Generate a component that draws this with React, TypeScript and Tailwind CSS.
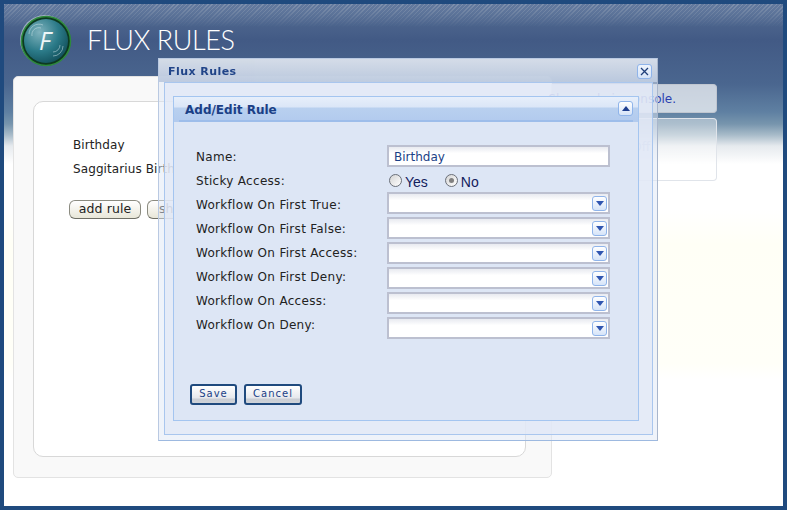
import React from "react";

const labels = [
  "Name:",
  "Sticky Access:",
  "Workflow On First True:",
  "Workflow On First False:",
  "Workflow On First Access:",
  "Workflow On First Deny:",
  "Workflow On Access:",
  "Workflow On Deny:",
];

function Tri({ up = false }: { up?: boolean }) {
  return (
    <svg width="8" height="5" viewBox="0 0 8 5">
      <path d={up ? "M0 5L4 0L8 5Z" : "M0 0L8 0L4 5Z"} fill={up ? "#1f3f8f" : "#2f55b0"} />
    </svg>
  );
}

function IconBox({ up = false }: { up?: boolean }) {
  return (
    <span className="flex h-[15px] w-[15px] items-center justify-center rounded-[3px] border border-[#8fb4ea] bg-[linear-gradient(#ffffff,#d6e4f8)]">
      <Tri up={up} />
    </span>
  );
}

function Select() {
  return (
    <div className="flex h-[22px] w-[223px] items-center justify-end border-2 border-[#bcc0d0] bg-[linear-gradient(#e8eaf0,#ffffff_35%)] pr-[1px]">
      <IconBox />
    </div>
  );
}

function Radio({ on = false, label }: { on?: boolean; label: string }) {
  return (
    <span className="flex items-center">
      <span className="flex h-[13px] w-[13px] items-center justify-center rounded-full border border-[#6a6f78] bg-[linear-gradient(135deg,#d4d4d4,#ffffff)]">
        {on && <span className="h-[5px] w-[5px] rounded-full bg-[#808080]" />}
      </span>
      <span className="ml-[3px] mt-[3px] font-['Liberation_Sans',sans-serif] text-[14px] leading-[16px] text-[#12205c]">{label}</span>
    </span>
  );
}

function Logo() {
  return (
    <svg width="54" height="54" viewBox="0 0 54 54" className="shrink-0">
      <defs>
        <radialGradient id="lg" cx="35%" cy="30%" r="80%">
          <stop offset="0" stopColor="#7fb2bd" />
          <stop offset="0.55" stopColor="#2b7a88" />
          <stop offset="1" stopColor="#0f4a55" />
        </radialGradient>
      </defs>
      <circle cx="26" cy="26" r="25" fill="#cfd8e0" opacity="0.6" />
      <circle cx="27" cy="27" r="24.5" fill="#0c3a20" />
      <circle cx="27" cy="27" r="24.5" fill="none" stroke="#2e8a3c" strokeWidth="1.5" />
      <circle cx="27" cy="27" r="22" fill="url(#lg)" />
      <path d="M10 20a10 10 0 0 1 14-9M13 22a7 7 0 0 1 9-8M34 42a10 10 0 0 0 10-10M34 38a7 7 0 0 0 7-7" fill="none" stroke="#cfe6ea" strokeOpacity="0.5" strokeWidth="1" />
      <text x="26" y="36" textAnchor="middle" fontSize="25" fontStyle="italic" fontFamily="'Open Sans', sans-serif" fill="#eef6f8">F</text>
    </svg>
  );
}

export default function App() {
  return (
    <div className="relative h-[510px] w-[787px] overflow-hidden border-4 border-[#1f4a7e] bg-[linear-gradient(#6f83a3_0px,#4a628b_22px,#425a85_36px,#4a668f_80px,#5f80a2_108px,#7795ad_120px,#a8bbc9_131px,#e6eaee_142px,#ffffff_160px,#ffffff_205px,#fffff6_240px,#fffff8_360px,#ffffff_375px)] font-['DejaVu_Sans',sans-serif]">
      <div className="absolute inset-x-0 top-0 h-[24px] bg-[repeating-linear-gradient(135deg,#8d9db6_0px,#8d9db6_1px,#56709a_1px,#56709a_3px)] opacity-50 [mask-image:linear-gradient(#000,transparent)]" />
      <header className="relative flex h-[72px] items-start pl-[15px] pt-[10px]">
        <Logo />
        <h1 className="ml-[14px] mt-[8px] font-['Lato',sans-serif] text-[27px] font-light leading-[36px] tracking-[-0.4px] text-white">
          FLUX RULES
        </h1>
      </header>

      <main className="relative flex items-start pl-[9px]">
        <section className="h-[402px] w-[539px] rounded-[5px] border border-[#e3e3e3] bg-[#f9f9f9] pl-[19px] pt-[24px]">
          <div className="h-[356px] w-[493px] rounded-[10px] border border-[#d8d8d8] bg-white pl-[35px] pt-[31px] text-[12px] tracking-[0.1px] text-[#222]">
            <p className="ml-[4px] leading-[24px]">Birthday</p>
            <p className="ml-[4px] leading-[24px]">Saggitarius Birthday</p>
            <div className="mt-[19px] flex gap-[6px]">
              <button className="h-[19px] w-[72px] rounded-[6px] border border-[#8b8b80] border-b-[#6f6f66] bg-[linear-gradient(#ffffff,#e8e6d8)] text-[12.5px] leading-none text-[#222]">add rule</button>
              <button className="h-[19px] w-[40px] rounded-l-[6px] border border-r-0 border-[#8b8b80] border-b-[#6f6f66] bg-[linear-gradient(#ffffff,#e8e6d8)] pl-[11px] text-left text-[12.5px] leading-none text-[#222]">show</button>
            </div>
          </div>
        </section>
        <aside className="mt-[8px] w-[165px]">
          <div className="flex h-[29px] items-center justify-end whitespace-nowrap rounded-r-[4px] border border-l-0 border-[#c0c6d0] bg-[#ffffff]/70 pr-[40px] text-[12px] text-[#2a3fb0]">
            Show rule in console.
          </div>
          <div className="mt-[5px] flex h-[63px] items-center justify-end whitespace-nowrap rounded-r-[4px] border border-l-0 border-[#e0e4ea] bg-[#ffffff]/40 pr-[66px] pb-[6px] text-[12px] text-[#aab8d8]">
            Turn Rule Off
          </div>
        </aside>
      </main>

      <div className="absolute left-[154px] top-[54px] h-[383px] w-[500px] border border-[#b9c9e2] border-b-[#9db9e0] border-r-[#a9b6cc] bg-[#dfe7f5]/50">
        <div className="h-[23px] bg-[linear-gradient(#d8dfea,#bccadf)] pl-[9px] pt-[6px] text-[11px] font-bold leading-[14px] tracking-[0.45px] text-[#1a3f86] opacity-95">
          Flux Rules
        </div>
        <span className="absolute right-[5px] top-[5px]">
          <span className="flex h-[15px] w-[15px] items-center justify-center rounded-[3px] border border-[#8fb4ea] bg-[linear-gradient(#eef4fc,#d6e4f8)]">
            <svg width="9" height="9" viewBox="0 0 9 9"><path d="M1 1L8 8M8 1L1 8" stroke="#1f3f7a" strokeWidth="1.3" /></svg>
          </span>
        </span>
        <div className="ml-[5px] h-[353px] w-[489px] border border-[#a9c6ee] bg-[#e2e9f6]/80 pl-[8px] pt-[13px]">
          <div className="h-[325px] w-[466px] border border-[#a4c5f0] bg-[#dde6f5]">
            <div className="relative flex h-[25px] items-start bg-[linear-gradient(#e7effb_0px,#dbe6f7_10px,#b9d0ef_11px,#b3cbee_23px)] pl-[11px] pt-[6px] text-[12px] font-bold leading-[14px] text-[#1a3f86]">
              Add/Edit Rule
              <span className="absolute right-[5px] top-[4px]"><IconBox up /></span>
              <span className="absolute bottom-0 left-[5px] right-[5px] h-[2px] bg-[#9dbdea]" />
            </div>
            <div className="flex pl-[22px] pt-[23px]">
              <div className="w-[191px] text-[12px] leading-[24px] tracking-[0.3px] text-[#222]">
                {labels.map((l) => (
                  <div key={l}>{l}</div>
                ))}
              </div>
              <div className="flex flex-col">
                <div className="flex h-[22px] w-[223px] items-center border-2 border-[#bcc0d0] bg-[linear-gradient(#e8eaf0,#ffffff_35%)] pl-[5px] pt-[1px] text-[12px] text-[#1a3f86]">
                  Birthday
                </div>
                <div className="flex h-[25px] items-center gap-[17px] pl-[2px] pt-[2px]">
                  <Radio label="Yes" />
                  <Radio on label="No" />
                </div>
                <div className="flex flex-col gap-[3px]">
                  <Select />
                  <Select />
                  <Select />
                  <Select />
                  <Select />
                  <Select />
                </div>
              </div>
            </div>
            <div className="ml-[16px] mt-[45px] flex gap-[7px] text-[10px] tracking-[1px] text-[#1a3f86]">
              <button className="h-[21px] w-[47px] rounded-[3px] border-2 border-[#1f4a7e] bg-[linear-gradient(#ffffff_0px,#e6e8ec_12px,#c9cdd4_13px,#cfd3d9_100%)] pb-[2px]">Save</button>
              <button className="h-[21px] w-[58px] rounded-[3px] border-2 border-[#1f4a7e] bg-[linear-gradient(#ffffff_0px,#e6e8ec_12px,#c9cdd4_13px,#cfd3d9_100%)] pb-[2px]">Cancel</button>
            </div>
          </div>
        </div>
      </div>
    </div>
  );
}
